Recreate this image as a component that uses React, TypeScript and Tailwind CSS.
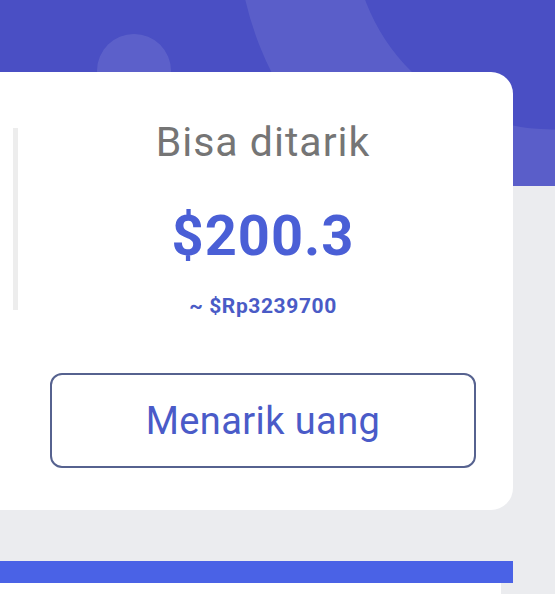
import React from 'react';

const App: React.FC = () => {
  return (
    <div className="w-[555px] h-[594px] overflow-hidden bg-[#ebecef] font-['Roboto',sans-serif]">
      {/* Header */}
      <div className="relative h-[186px] overflow-hidden bg-[#4a4fc4]">
        <svg className="absolute inset-0" width="555" height="186" viewBox="0 0 555 186">
          <circle cx="134" cy="71" r="37" fill="#ffffff" fillOpacity="0.1" />
          <circle cx="552" cy="-70" r="257" fill="none" stroke="#ffffff" strokeOpacity="0.09" strokeWidth="115" />
        </svg>
      </div>

      {/* Balance card */}
      <div className="relative z-10 -mt-[114px] w-[513px] h-[438px] bg-white rounded-r-[22px] pt-[50px] pl-[13px]">
        <div className="flex items-start">
          <div className="mt-[6px] w-[5px] h-[182px] bg-[#ededed]" />
          <div className="flex-1 pr-[5px] flex flex-col items-center">
            <p className="text-[41px] leading-[41px] tracking-[1px] text-[#757575]">Bisa ditarik</p>
            <p className="mt-[45px] text-[56px] leading-[56px] tracking-[1px] font-bold text-[#4a5fd6]">$200.3</p>
            <p className="mt-[32px] text-[21px] leading-[21px] tracking-[0.6px] font-bold text-[#4a5bc6]">~ $Rp3239700</p>
          </div>
        </div>
        <button className="mt-[56px] mx-auto flex items-center justify-center w-[426px] h-[95px] rounded-[12px] border-2 border-[#56628f] text-[38px] leading-[38px] tracking-[0.4px] text-[#4a5bc8]">
          Menarik uang
        </button>
      </div>

      {/* Next section */}
      <div className="mt-[51px] w-[513px] h-[22px] bg-[#4a62e6]" />
      <div className="w-[501px] h-[20px] bg-white" />
    </div>
  );
};

export default App;
